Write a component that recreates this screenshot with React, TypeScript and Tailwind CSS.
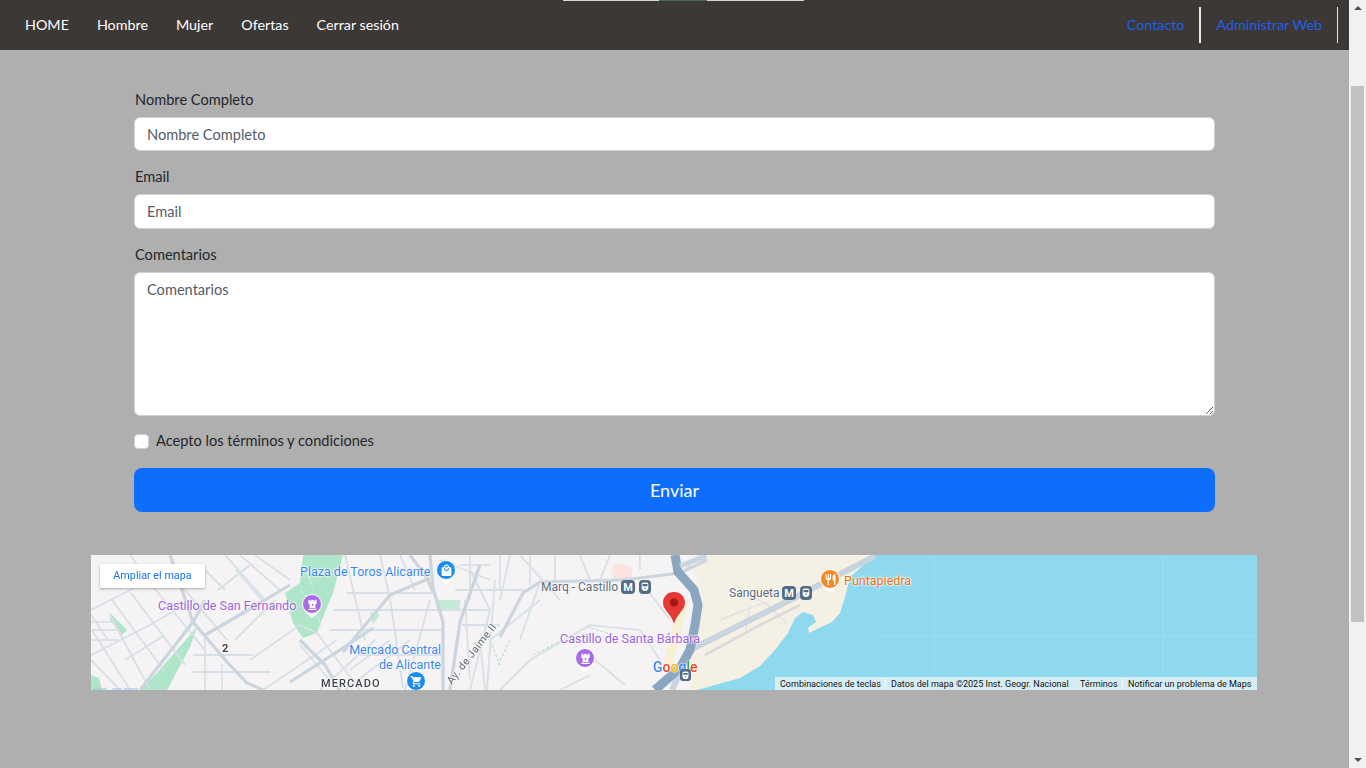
import type { ReactNode } from "react";
import { FaChessRook } from "react-icons/fa";
import { MdDirectionsRailway, MdLocalMall, MdRestaurant, MdShoppingCart } from "react-icons/md";

const mainRoads = [
  "170,555 193,622 227,662 247,683 263,690",
  "140,690 193,622 205,600",
  "205,635 243,613 290,585",
  "430,555 433,588 443,622 443,690",
  "410,555 427,578 433,592",
  "480,565 460,622 450,690",
  "500,637 523,593 540,582 623,580 680,573 707,560",
  "343,652 390,595 430,578",
  "290,682 337,652 373,628",
  "300,640 325,665 340,690",
];

const thinRoads = [
  "91,610 130,590 170,570", "91,655 150,625 193,600", "120,690 91,660", "112,600 165,672",
  "131,593 185,665", "150,583 205,650", "170,572 227,640", "92,630 130,690", "110,615 150,690",
  "91,615 108,640", "91,630 118,630", "91,622 112,622", "91,640 118,640", "125,660 165,635",
  "193,655 253,655", "193,672 270,672", "205,635 205,690", "222,664 222,690", "235,640 275,600",
  "218,590 250,565", "236,570 262,600", "200,565 225,590", "250,660 300,625 317,633 360,690",
  "263,690 337,640", "300,645 338,690", "320,690 375,640", "347,593 433,593", "333,610 490,610",
  "380,555 390,598 403,688", "345,555 365,640", "400,555 415,590", "330,630 443,630",
  "360,655 443,655", "430,600 405,690", "470,570 490,610 470,690", "460,565 490,565",
  "455,590 525,590", "462,625 500,625", "480,640 485,690", "465,600 470,680", "495,580 487,690",
  "510,555 500,600", "520,555 560,600", "580,555 590,580", "610,555 600,580", "640,580 670,620",
  "540,582 520,640", "500,690 530,660 590,625 640,630 660,660", "595,660 625,685", "680,575 700,555",
  "640,570 640,555", "560,690 590,675", "240,555 280,590", "255,555 290,580", "225,555 265,600",
  "130,555 150,583", "100,590 140,570", "350,670 390,640", "345,690 410,640", "470,555 470,600",
  "500,555 500,590", "530,555 530,585", "555,555 555,582", "490,640 540,600", "440,560 490,580",
];

const coast =
  "875,555 850,577 845,597 840,613 832,622 815,630 809,633 808,628 816,622 813,615 803,612 795,618 788,633 775,650 760,666 740,678 697,690 1257,690 1257,555";

const labelGlow = "[text-shadow:0_0_2px_#fff,0_0_2px_#fff,0_0_3px_#fff]";

function MapLines() {
  return (
    <svg viewBox="91 555 1166 135" className="absolute inset-0 h-full w-full" fill="none">
      <rect x="91" y="555" width="1166" height="135" fill="#f5f3f4" />
      <polygon points="690,555 1000,555 900,690 690,690 690,640 703,600" fill="#f5f0e4" />
      <polygon points={coast} fill="#8fd9ef" />
      <path d="M934 555V677M1163 555V677M875 636H1257" stroke="#9bdef0" strokeWidth="1" />
      <polygon points="613,565 622,563 632,568 632,580 613,580" fill="#fde3e0" />
      <polygon points="303,555 343,555 333,593 323,617 317,633 303,638 293,623 285,593 300,583" fill="#afe5c8" />
      <polygon points="197,627 190,647 167,690 140,690 157,673" fill="#afe5c8" />
      <polygon points="110,613 127,630 122,635 110,620" fill="#afe5c8" />
      <polygon points="91,675 99,678 102,690 91,690" fill="#afe5c8" />
      <polygon points="370,612 380,614 373,625" fill="#c2ead4" />
      <polygon points="437,600 460,600 460,611 437,611" fill="#c2ead4" />
      <path d="M300 590c12 12 18 26 22 38M305 568l8 20M610 570l5 8" stroke="#d6f0e2" strokeWidth="1" />
      <path d="M533 655l55-28 25 8M490 640l10 25M510 640l-12 25" stroke="#a8e0c2" strokeWidth="1" strokeDasharray="3 2" />
      {thinRoads.map((p) => (
        <polyline key={p} points={p} stroke="#d8e0e7" strokeWidth="1.8" />
      ))}
      {mainRoads.map((p) => (
        <polyline key={p} points={p} stroke="#cbd5de" strokeWidth="3.2" />
      ))}
      <path d="M720 620l45-18 22 22M735 585l40 25M745 635l5-30" stroke="#dfe2e2" strokeWidth="1.4" />
      <path d="M684 600c-4 20-10 40-18 70" stroke="#f8f0d4" strokeWidth="9" />
      <polyline points="672,690 690,650 790,600 875,556" stroke="#c9d4df" strokeWidth="6" />
      <polyline points="705,655 760,625 800,605" stroke="#d9dcdc" strokeWidth="3" />
      <polyline points="675,555 678,572 694,590 698,605 695,625 690,650 680,668 655,690" stroke="#8ba6c1" strokeWidth="9" />
      <polyline points="680,566 706,556" stroke="#c9d4df" strokeWidth="5" />
      <path d="M93 689h14M112 689h10M124 689h14" stroke="#9cc2f0" strokeWidth="1" />
    </svg>
  );
}

function Poi(props: { className: string; color: string; children: ReactNode }) {
  return (
    <div className={`absolute h-[23px] w-[20px] ${props.className}`}>
      <div className="absolute bottom-[1px] left-[4px] h-[12px] w-[12px] rotate-45 rounded-[2px] bg-white" />
      <div
        className={`absolute left-0 top-0 flex h-[20px] w-[20px] items-center justify-center rounded-full border border-white text-[13px] text-white ${props.color}`}
      >
        {props.children}
      </div>
    </div>
  );
}

function MetroBadges(props: { className: string }) {
  return (
    <div className={`absolute flex items-center gap-[4px] ${props.className}`}>
      <div className="flex h-[14px] w-[14px] items-center justify-center rounded-[4px] bg-[#506c87] font-['Roboto',sans-serif] text-[11px] font-bold leading-none text-white">
        M
      </div>
      <div className="flex h-[14px] w-[12px] items-center justify-center rounded-[4px] bg-[#506c87] text-[10px] text-white">
        <MdDirectionsRailway />
      </div>
    </div>
  );
}

function MapEmbed() {
  return (
    <div className="relative ml-[91px] mt-[43px] h-[135px] w-[1166px] overflow-hidden font-['Roboto',sans-serif]">
      <div className="absolute inset-0 blur-[0.45px]">
        <MapLines />

        <span className={`absolute left-[209px] top-[10px] text-[12.5px] leading-[14px] text-[#3a86ee] ${labelGlow}`}>
          Plaza de Toros Alicante
        </span>
        <span className={`absolute left-[67px] top-[44px] text-[12.5px] leading-[14px] text-[#9c62de] ${labelGlow}`}>
          Castillo de San Fernando
        </span>
        <span className={`absolute left-[250px] top-[87px] w-[100px] text-right text-[12.5px] leading-[15px] text-[#3a86ee] ${labelGlow}`}>
          Mercado Central de Alicante
        </span>
        <span className={`absolute left-[230px] top-[122px] text-[11px] font-medium leading-[14px] tracking-[1.1px] text-[#3f4346] ${labelGlow}`}>
          MERCADO
        </span>
        <span className={`absolute left-[131px] top-[87px] text-[11px] font-bold leading-[14px] text-[#3f4346] ${labelGlow}`}>
          2
        </span>
        <span className={`absolute left-[450px] top-[25px] text-[12px] leading-[14px] text-[#5b6b7d] ${labelGlow}`}>
          Marq - Castillo
        </span>
        <span className={`absolute left-[638px] top-[31px] text-[12px] leading-[14px] text-[#5b6b7d] ${labelGlow}`}>
          Sangueta
        </span>
        <span className={`absolute left-[469px] top-[77px] text-[12.5px] leading-[14px] text-[#9c62de] ${labelGlow}`}>
          Castillo de Santa Bárbara
        </span>
        <span className={`absolute left-[753px] top-[19px] text-[12.5px] leading-[14px] text-[#e8710a] ${labelGlow}`}>
          Puntapiedra
        </span>
        <span className={`absolute left-[341px] top-[93px] w-[80px] -rotate-[52deg] whitespace-nowrap text-center text-[10.5px] leading-[12px] tracking-[0.4px] text-[#5f6368] ${labelGlow}`}>
          Ay. de Jaime II
        </span>

        <Poi className="left-[345px] top-[5px]" color="bg-[#1a8cf2]">
          <MdLocalMall />
        </Poi>
        <Poi className="left-[211px] top-[39px]" color="bg-[#a86ae6]">
          <FaChessRook className="text-[11px]" />
        </Poi>
        <Poi className="left-[484px] top-[93px]" color="bg-[#a86ae6]">
          <FaChessRook className="text-[11px]" />
        </Poi>
        <Poi className="left-[315px] top-[116px]" color="bg-[#1a8cf2]">
          <MdShoppingCart />
        </Poi>
        <Poi className="left-[729px] top-[14px]" color="bg-[#f58a24]">
          <MdRestaurant />
        </Poi>
        <MetroBadges className="left-[530px] top-[25px]" />
        <MetroBadges className="left-[691px] top-[31px]" />

        <svg viewBox="0 0 24 34" className="absolute left-[571px] top-[36px] h-[34px] w-[24px]">
          <path d="M12 1C5.6 1 1 5.8 1 11.6c0 4.2 2.2 7 4.6 10 2.6 3.2 5 6.6 6.4 11.2 1.4-4.6 3.8-8 6.4-11.2 2.4-3 4.6-5.8 4.6-10C23 5.8 18.4 1 12 1z" fill="#e53935" />
          <circle cx="12" cy="11.5" r="4" fill="#a51616" />
        </svg>

        <div className="absolute left-[562px] top-[104px] text-[14px] font-medium leading-[16px] [text-shadow:0_0_2px_#fff,0_0_2px_#fff]">
          <span className="text-[#4285f4]">G</span>
          <span className="text-[#ea4335]">o</span>
          <span className="text-[#fbbc05]">o</span>
          <span className="text-[#4285f4]">g</span>
          <span className="text-[#34a853]">l</span>
          <span className="text-[#ea4335]">e</span>
        </div>
        <div className="absolute left-[589px] top-[114px] flex h-[12px] w-[11px] items-center justify-center rounded-[3px] bg-[#506c87] text-[9px] text-white">
          <MdDirectionsRailway />
        </div>
      </div>

      <button className="absolute left-[9px] top-[9px] h-[24px] w-[105px] rounded-[2px] bg-white text-[10.8px] text-[#1a73e8] shadow-[0_1px_3px_rgba(0,0,0,0.3)]">
        Ampliar el mapa
      </button>

      <div className="absolute bottom-0 right-0 flex h-[13px] w-[482px] items-center bg-[#d6edf4] pt-px text-[9px] leading-[12px] text-[#111]">
        <span className="w-[111px] whitespace-nowrap border-r border-[#eef8fb] pl-[5px]">Combinaciones de teclas</span>
        <span className="w-[194px] whitespace-nowrap pl-[5px]">Datos del mapa ©2025 Inst. Geogr. Nacional</span>
        <span className="w-[43px] whitespace-nowrap border-r border-[#eef8fb]">Términos</span>
        <span className="whitespace-nowrap pl-[5px]">Notificar un problema de Maps</span>
      </div>
    </div>
  );
}

function Navbar() {
  return (
    <nav className="relative flex h-[50px] items-center justify-between bg-[#3c3835] pl-[25px] pr-[11px] text-[14.3px]">
      <div className="absolute left-[563px] top-0 flex h-px">
        <div className="w-[96px] bg-[#d8d8d8]" />
        <div className="w-[48px] bg-[#4d6354]" />
        <div className="w-[97px] bg-[#d8d8d8]" />
      </div>
      <ul className="flex gap-[28px] text-white">
        <li>HOME</li>
        <li>Hombre</li>
        <li>Mujer</li>
        <li>Ofertas</li>
        <li>Cerrar sesión</li>
      </ul>
      <div className="flex h-[36px] items-center text-[#1f5fe8]">
        <a className="flex h-full items-center border-r-2 border-[#e8e8e8] pr-[15px]">Contacto</a>
        <a className="flex h-full items-center border-r border-[#e8e8e8] px-[15px]">Administrar Web</a>
      </div>
    </nav>
  );
}

function ContactForm() {
  const fieldClass =
    "block w-full rounded-[6px] border border-[#d0d1d6] bg-white px-3 text-[14.6px] text-[#212529] placeholder:text-[#565c66] outline-none";
  const labelClass = "mb-[6px] block h-6 px-px pt-px leading-[24px]";
  return (
    <form className="ml-[134px] w-[1081px] pt-[37px] text-[14.6px] text-[#24272b]">
      <label className={labelClass}>Nombre Completo</label>
      <input className={`${fieldClass} mb-[13px] h-[34px]`} placeholder="Nombre Completo" />
      <label className={labelClass}>Email</label>
      <input className={`${fieldClass} mb-[13px] h-[35px]`} placeholder="Email" />
      <label className={labelClass}>Comentarios</label>
      <textarea className={`${fieldClass} h-[144px] py-[5px] leading-[24px]`} placeholder="Comentarios" />
      <label className="mt-[13px] flex h-6 items-center gap-[7px]">
        <span className="h-[15px] w-[15px] rounded-[4px] border border-[#d0d1d6] bg-white" />
        Acepto los términos y condiciones
      </label>
      <button
        type="button"
        className="mt-[15px] block h-[44px] w-full rounded-[8px] bg-[#0d6efd] text-[18px] text-white"
      >
        Enviar
      </button>
    </form>
  );
}

function Scrollbar() {
  return (
    <div className="flex h-[768px] w-[17px] shrink-0 flex-col items-center justify-between bg-[#f1f1f1] py-[6px]">
      <div className="h-0 w-0 border-x-[4px] border-b-[4px] border-x-transparent border-b-[#505050]" />
      <div className="absolute right-[2px] top-[86px] h-[536px] w-[13px] bg-[#c1c1c1]" />
      <div className="h-0 w-0 border-x-[4px] border-t-[4px] border-x-transparent border-t-[#505050]" />
    </div>
  );
}

export default function App() {
  return (
    <div className="relative flex h-[768px] w-[1366px] overflow-hidden bg-[#afafaf] font-['Lato',sans-serif]">
      <div className="min-w-0 flex-1">
        <Navbar />
        <ContactForm />
        <MapEmbed />
      </div>
      <Scrollbar />
    </div>
  );
}
